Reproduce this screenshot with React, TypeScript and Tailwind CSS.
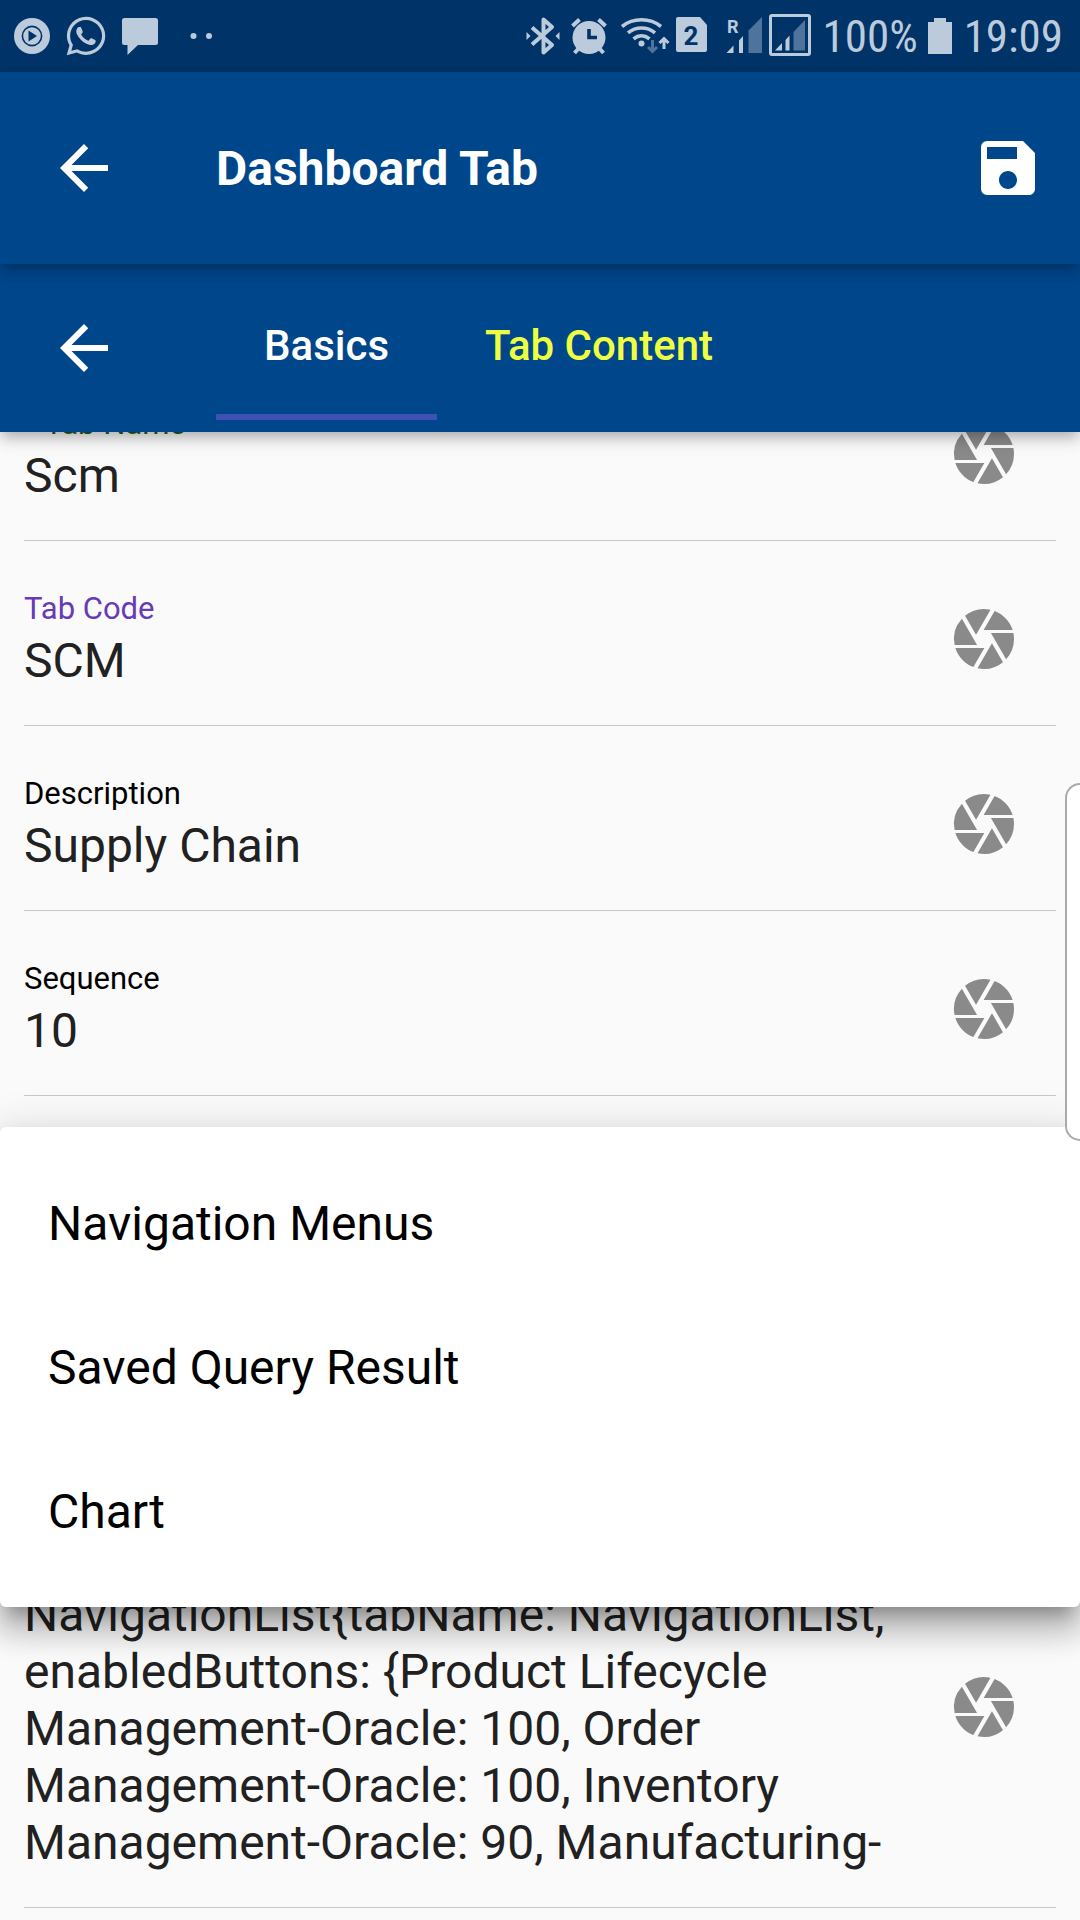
import { MdArrowBack, MdCamera, MdSave } from "react-icons/md";
import { FaWhatsapp } from "react-icons/fa";

const INK = "#bccbdc";
const DIM = "#4e739c";
const BAR = "#003367";

type Field = {
  id: string;
  label: string;
  value: string;
  labelClass: string;
  rows?: number;
};

const topFields: Field[] = [
  { id: "tab-name", label: "* Tab Name", value: "Scm", labelClass: "text-[#1b5e20]" },
  { id: "tab-code", label: "Tab Code", value: "SCM", labelClass: "text-[#673ab7]" },
  { id: "description", label: "Description", value: "Supply Chain", labelClass: "text-black" },
  { id: "sequence", label: "Sequence", value: "10", labelClass: "text-black" },
];

const contentField: Field = {
  id: "tab-content",
  label: "Content",
  value:
    "NavigationList{tabName: NavigationList, enabledButtons: {Product Lifecycle Management-Oracle: 100, Order Management-Oracle: 100, Inventory Management-Oracle: 90, Manufacturing-",
  labelClass: "text-black",
  rows: 5,
};

const menuItems = ["Navigation Menus", "Saved Query Result", "Chart"];

function StatusBar() {
  return (
    <div className="flex h-[72px] items-center justify-between bg-[#003367] pl-[14px] pr-[17px] text-[#bccbdc]">
      <div className="flex items-center gap-4">
        <svg viewBox="14 14 36 44" className="h-[44px] w-[36px]" aria-hidden="true">
          <circle cx="32" cy="36" r="18" fill={INK} />
          <circle cx="32" cy="36" r="9.6" fill="none" stroke={BAR} strokeWidth="1.6" />
          <path d="M28.500 30.500v11l8.500-5.500z" fill={BAR} />
        </svg>
        <FaWhatsapp className="h-[44px] w-[40px]" aria-hidden="true" />
        <svg viewBox="122 14 36 44" className="h-[44px] w-[36px]" aria-hidden="true">
          <path
            d="M124.500 18h31a2.500 2.500 0 0 1 2.500 2.500v22a2.500 2.500 0 0 1-2.500 2.500H138l-10.500 10V45h-3a2.500 2.500 0 0 1-2.500-2.500v-22a2.500 2.500 0 0 1 2.500-2.500z"
            fill={INK}
          />
        </svg>
        <svg viewBox="174 14 40 44" className="h-[44px] w-[40px]" aria-hidden="true">
          <circle cx="193.500" cy="36" r="3" fill={INK} />
          <circle cx="209" cy="36" r="3" fill={INK} />
        </svg>
      </div>
      <div className="flex items-center">
        <svg viewBox="526 14 34 44" className="mr-[11px] h-[44px] w-[34px]" aria-hidden="true">
          <path
            d="M532 27.500L552 45l-8.500 7.500v-33L552 27 532 44.500"
            fill="none"
            stroke={INK}
            strokeWidth="4"
            strokeLinejoin="round"
          />
          <path d="M526.500 32l4 4-4 4zM559.500 32l-4 4 4 4z" fill={INK} />
        </svg>
        <svg viewBox="571 14 36 44" className="mr-[14px] h-[44px] w-[36px]" aria-hidden="true">
          <circle cx="589" cy="37.500" r="16.500" fill={INK} />
          <path
            d="M572.500 26l7-6.500M605.500 26l-7-6.500M579 48l-4.500 5M599 48l4.500 5"
            stroke={INK}
            strokeWidth="4"
            fill="none"
          />
          <path d="M589 29v8.500h8" stroke={BAR} strokeWidth="3.600" fill="none" />
        </svg>
        <svg viewBox="621 14 49 44" className="mr-[5px] h-[44px] w-[49px]" aria-hidden="true">
          <g fill="none" stroke={INK} strokeWidth="3.600">
            <path d="M622 26.500c11-9 28-9 39 0" />
            <path d="M628 32.800c8-6.500 19-6.500 27 0" />
            <path d="M633.500 38.800c5-4 11-4 16 0" />
          </g>
          <circle cx="641.500" cy="43.500" r="3" fill={INK} />
          <path d="M652.500 40v11M648 47l4.500 4.500 4.500-4.500" stroke={DIM} strokeWidth="3" fill="none" />
          <path d="M664 49V39M659.500 43l4.500-4.500 4.500 4.500" stroke={INK} strokeWidth="3" fill="none" />
        </svg>
        <svg viewBox="675 14 33 44" className="mr-[18px] h-[44px] w-[33px]" aria-hidden="true">
          <path
            d="M678 17h22l7 8v25a2 2 0 0 1-2 2h-27a2 2 0 0 1-2-2V19a2 2 0 0 1 2-2z"
            fill={INK}
          />
          <text
            x="691"
            y="44.500"
            textAnchor="middle"
            fontFamily="Roboto, sans-serif"
            fontWeight="700"
            fontSize="26"
            fill={BAR}
          >
            2
          </text>
        </svg>
        <svg viewBox="726 14 37 44" className="mr-[6px] h-[44px] w-[37px]" aria-hidden="true">
          <text x="727" y="32.500" fontFamily="Roboto, sans-serif" fontWeight="700" fontSize="18" fill={INK}>
            R
          </text>
          <path d="M726.500 53h7v-7.500zM739 53h4V36l-4 4.500z" fill={INK} />
          <path d="M748.500 53h13.500V17l-13.500 13.500z" fill={DIM} />
        </svg>
        <svg viewBox="769 14 43 44" className="mr-[11px] h-[44px] w-[43px]" aria-hidden="true">
          <rect x="770.500" y="15.500" width="39" height="39" rx="1.500" fill="none" stroke={INK} strokeWidth="3" />
          <path d="M775 50.500h7v-7.500zM785.500 50.500h4V35.500l-4 4.500z" fill={INK} />
          <path d="M793.500 50.500H805V20l-11.500 12z" fill={DIM} />
        </svg>
        <span className="mr-[10px] pt-[2px] font-['Roboto_Condensed','Liberation_Sans_Narrow',Roboto,sans-serif] text-[45px] leading-[52px]">
          100%
        </span>
        <svg viewBox="928 14 24 44" className="mr-[12px] h-[44px] w-[24px]" aria-hidden="true">
          <path d="M934 18h12v4h6v32h-24V22h6z" fill={INK} />
        </svg>
        <span className="pt-[2px] font-['Roboto_Condensed','Liberation_Sans_Narrow',Roboto,sans-serif] text-[45px] leading-[52px]">
          19:09
        </span>
      </div>
    </div>
  );
}

function FieldRow({ field }: { field: Field }) {
  return (
    <div className="mx-6 flex items-center border-b border-[#c3c8cd] pr-9">
      <div className="min-w-0 flex-1 pb-[36px] pt-[48px]">
        <label htmlFor={field.id} className={`block text-[31px] leading-[40px] ${field.labelClass}`}>
          {field.label}
        </label>
        {field.rows ? (
          <textarea
            id={field.id}
            rows={field.rows}
            defaultValue={field.value}
            className="mt-[3px] block w-full resize-none overflow-hidden bg-transparent text-[48px] leading-[57px] text-[#212121] outline-none"
          />
        ) : (
          <input
            id={field.id}
            defaultValue={field.value}
            className="mt-[3px] block h-[57px] w-full bg-transparent text-[48px] leading-[57px] text-[#212121] outline-none"
          />
        )}
      </div>
      <button type="button" aria-label={`Pick ${field.label}`} className="mt-3 text-[#8a8a8a]">
        <MdCamera className="size-[72px]" />
      </button>
    </div>
  );
}

export default function App() {
  return (
    <div className="relative flex h-screen flex-col overflow-hidden bg-[#fafafa] font-[Roboto,sans-serif]">
      <StatusBar />
      <header className="relative z-20 flex h-[192px] shrink-0 items-center bg-[#00468b] pl-12 pr-9 text-white shadow-[0_6px_12px_-3px_rgba(0,0,0,0.2),0_9px_15px_rgba(0,0,0,0.14)]">
        <button type="button" aria-label="Back">
          <MdArrowBack className="size-[72px]" />
        </button>
        <h1 className="ml-24 flex-1 pt-[2px] text-[48px] font-bold leading-[56px]">Dashboard Tab</h1>
        <button type="button" aria-label="Save">
          <MdSave className="size-[72px]" />
        </button>
      </header>
      <nav className="relative z-10 flex h-[168px] shrink-0 items-center bg-[#00468b] pl-12 text-white shadow-[0_6px_12px_-3px_rgba(0,0,0,0.2),0_9px_15px_rgba(0,0,0,0.14)]">
        <button type="button" aria-label="Back to list">
          <MdArrowBack className="size-[72px]" />
        </button>
        <div role="tablist" className="ml-24 flex h-[144px]">
          <button
            type="button"
            role="tab"
            aria-selected="true"
            className="border-b-[6px] border-[#3f51b5] px-12 pt-[2px] text-[42px] font-medium leading-[50px]"
          >
            Basics
          </button>
          <button
            type="button"
            role="tab"
            aria-selected="false"
            className="border-b-[6px] border-transparent px-12 pt-[2px] text-[42px] font-medium leading-[50px] text-[#eeff41]"
          >
            Tab Content
          </button>
        </div>
      </nav>
      <main className="flex-1">
        <div className="-mt-[76px]">
          {topFields.map((field) => (
            <FieldRow key={field.id} field={field} />
          ))}
          <div className="relative h-[399px]">
            <ul
              role="menu"
              className="absolute inset-x-0 top-[31px] z-10 rounded-[6px] bg-white py-6 shadow-[0_15px_15px_-9px_rgba(0,0,0,0.25),0_24px_30px_3px_rgba(0,0,0,0.18),0_9px_42px_6px_rgba(0,0,0,0.15)]"
            >
              {menuItems.map((item) => (
                <li key={item} role="none">
                  <button
                    type="button"
                    role="menuitem"
                    className="flex h-[144px] w-full items-center px-12 pt-[2px] text-left text-[48px] leading-[56px] text-black"
                  >
                    {item}
                  </button>
                </li>
              ))}
            </ul>
          </div>
          <FieldRow field={contentField} />
        </div>
      </main>
      <div className="absolute right-0 top-[783px] z-30 h-[358px] w-[15px] rounded-l-[16px] border-2 border-r-0 border-[#aaaaaa] bg-white" />
    </div>
  );
}
